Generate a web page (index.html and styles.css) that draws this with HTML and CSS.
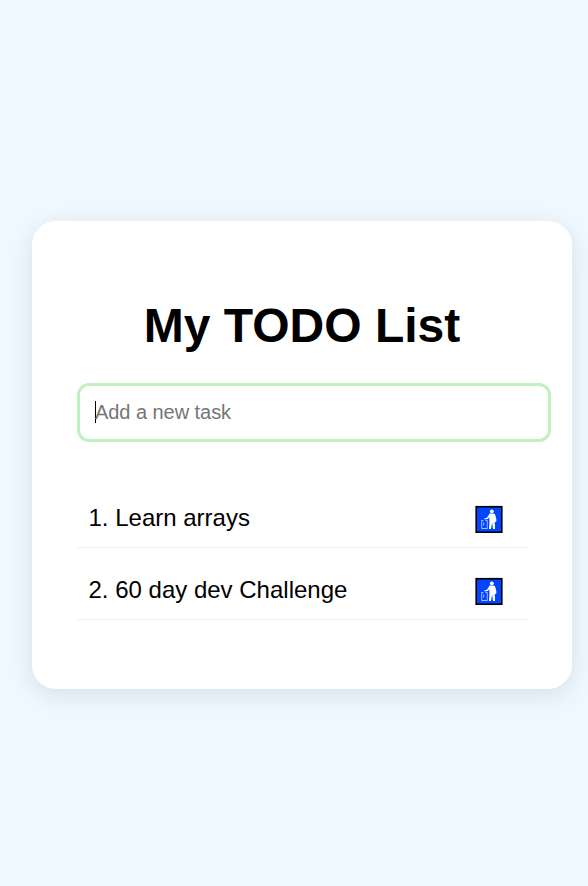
FILE: index.html
```html
<!DOCTYPE html>
<html lang="en">
<head>
<meta charset="utf-8">
<title>My TODO List</title>
<link rel="stylesheet" href="styles.css">
</head>
<body>
<svg class="defs" width="0" height="0">
  <symbol id="litter" viewBox="0 0 28 28">
    <rect x=".4" y=".9" width="27.200" height="27.100" fill="#000"/>
    <rect x="2" y="2.600" width="24" height="23.800" fill="#0046ff"/>
    <circle cx="16.800" cy="6.300" r="1.900" fill="#fff"/>
    <path d="M14.600 8.500h4.400l1.200 1.200 1.300 5.300-.5 2-1.200-.2.200 7.200h-2l-.8-6.500-1.200 6.500h-2l.5-8.500-.2-3.200-1.500 1.700-3.300.6-.2-1.100 2.700-.8z" fill="#fff"/>
    <path d="M6.500 15.500h2m2 0h1.800v8H6.700v-8M8.700 17.500v3" fill="none" stroke="#fff" stroke-width=".8" stroke-opacity=".8"/>
  </symbol>
</svg>
<main class="card">
  <h1 class="title">My TODO List</h1>
  <div class="field"><span class="caret"></span><span class="placeholder">Add a new task</span></div>
  <ul class="list">
    <li class="item"><span>1. Learn arrays</span><svg class="icon"><use href="#litter"/></svg></li>
    <li class="item"><span>2. 60 day dev Challenge</span><svg class="icon"><use href="#litter"/></svg></li>
  </ul>
</main>
</body>
</html>
```
FILE: styles.css
```css
* { box-sizing: border-box; }
body {
  margin: 0;
  height: 886px;
  overflow: hidden;
  background: #f0f8ff;
  font-family: "Liberation Sans", Arial, sans-serif;
  color: #000;
}
.defs { display: none; }
.card {
  width: 540px;
  height: 468px;
  margin: 221px 0 0 32px;
  padding: 77px 45px 0;
  background: #fff;
  border-radius: 24px;
  box-shadow: 0 6px 24px rgba(0, 0, 0, 0.1);
}
.title {
  margin: 0 0 29px;
  font-size: 48px;
  line-height: 56px;
  text-align: center;
}
.field {
  display: flex;
  align-items: center;
  width: 474px;
  height: 59px;
  padding-left: 15px;
  border: 3px solid #c1f0c1;
  border-radius: 12px;
  font-size: 20px;
  color: #757575;
}
.caret { width: 1px; height: 22px; margin: -2px -1px 0 0; background: #000; }
.placeholder { letter-spacing: -0.05px; }
.list { margin: 34px 0 0; padding: 0; list-style: none; }
.item {
  display: flex;
  align-items: flex-end;
  justify-content: space-between;
  height: 72px;
  padding: 0 24px 14px 11.500px;
  border-bottom: 1px solid #eee;
  font-size: 24px;
  line-height: 30px;
}
.icon { width: 28px; height: 28px; }
```
